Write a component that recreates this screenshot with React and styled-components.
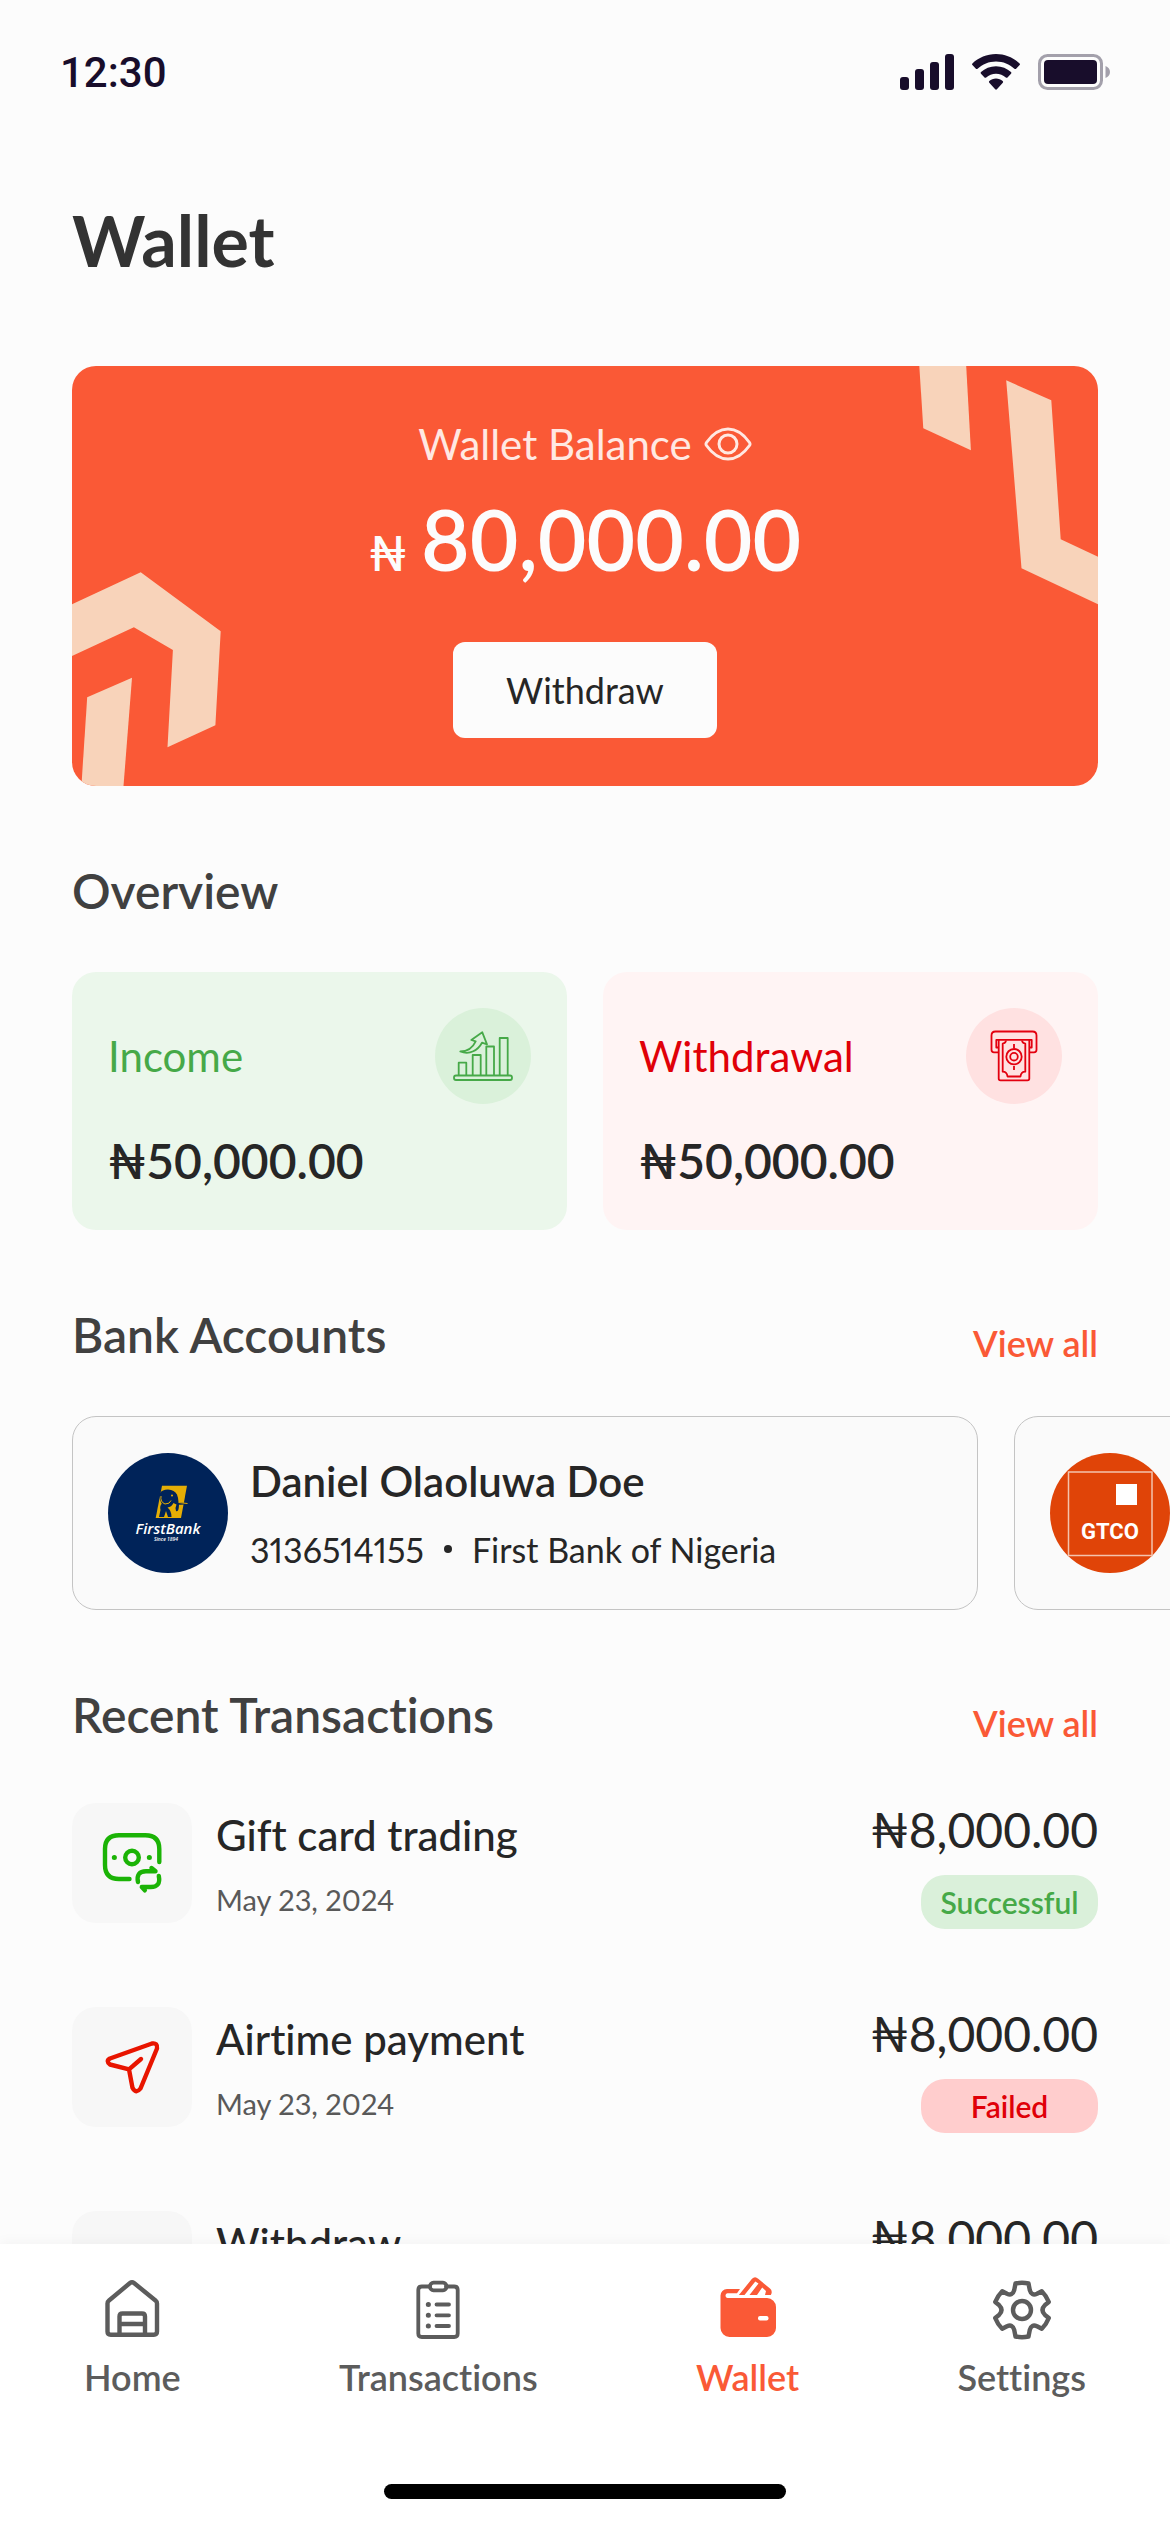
import React from 'react';
import styled, { createGlobalStyle } from 'styled-components';

const GlobalStyle = createGlobalStyle`
  * {
    box-sizing: border-box;
    margin: 0;
    padding: 0;
  }

  body {
    background: #fcfcfc;
    font-family: Lato, "Open Sans", sans-serif;
    font-variant-ligatures: none;
    color: #262626;
  }
`;

const transactions = [
  { id: 1, title: 'Gift card trading', date: 'May 23, 2024', amount: '₦8,000.00', status: 'Successful', icon: 'gift' },
  { id: 2, title: 'Airtime payment', date: 'May 23, 2024', amount: '₦8,000.00', status: 'Failed', icon: 'send' },
  { id: 3, title: 'Withdraw', date: 'May 23, 2024', amount: '₦8,000.00', status: 'Successful', icon: 'send' },
];

/* ---------- icons ---------- */

const SignalIcon = () => (
  <svg width="54" height="36" viewBox="0 0 54 36" fill="#180d2b" aria-hidden="true">
    <rect x="0" y="23" width="9" height="13" rx="3" />
    <rect x="15" y="15" width="9" height="21" rx="3" />
    <rect x="30" y="8" width="9" height="28" rx="3" />
    <rect x="45" y="0" width="9" height="36" rx="3" />
  </svg>
);

const WifiIcon = () => (
  <svg width="48" height="36" viewBox="0 0 48 36" fill="#180d2b" aria-hidden="true">
    <path d="M24 0C14.800 0 6.500 3.600.400 9.400c-.5.500-.5 1.200 0 1.700l3.500 3.600c.5.500 1.200.5 1.700 0C10.400 10.200 16.900 7.400 24 7.400s13.600 2.800 18.400 7.300c.5.500 1.200.5 1.700 0l3.500-3.600c.5-.5.5-1.200 0-1.700C41.500 3.600 33.200 0 24 0z" />
    <path d="M24 12.200c-5.800 0-11.100 2.200-15 5.900-.5.500-.5 1.200 0 1.700l3.500 3.600c.5.500 1.200.5 1.700 0 2.600-2.300 6-3.700 9.800-3.700s7.200 1.400 9.800 3.700c.5.500 1.200.5 1.700 0l3.500-3.600c.5-.5.5-1.200 0-1.700-3.900-3.700-9.200-5.900-15-5.900z" />
    <path d="M24 24.600c-2.600 0-4.900.9-6.700 2.400-.5.500-.5 1.200 0 1.700l5.900 6.600c.5.500 1.200.5 1.700 0l5.900-6.600c.5-.5.400-1.200-.1-1.700-1.800-1.500-4.100-2.400-6.700-2.400z" />
  </svg>
);

const BatteryIcon = () => (
  <svg width="72" height="36" viewBox="0 0 72 36" aria-hidden="true">
    <rect x="1.500" y="1.500" width="62" height="33" rx="8" fill="none" stroke="#a3a0ab" strokeWidth="3" />
    <rect x="6" y="6" width="53" height="24" rx="4" fill="#180d2b" />
    <path d="M67.500 12v12c2.600-1 4.500-3.300 4.500-6s-1.900-5-4.500-6z" fill="#a3a0ab" />
  </svg>
);

const EyeIcon = () => (
  <svg width="48" height="34" viewBox="0 0 48 34" fill="none" stroke="#ffe8e2" strokeWidth="3" aria-hidden="true">
    <path d="M2.500 15.500Q12 2 24 2t21.500 13.500q1 1.500 0 3Q36 32 24 32T2.500 18.500q-1-1.500 0-3z" />
    <circle cx="24" cy="17" r="9" />
  </svg>
);

const IncomeIcon = () => (
  <svg width="96" height="96" viewBox="0 0 96 96" fill="none" stroke="#46a948" strokeWidth="1.800" strokeLinejoin="round" aria-hidden="true">
    <rect x="19" y="67.500" width="58" height="4.500" rx="2" />
    <path d="M23.700 67V54.700h7.600V67M37.700 67V47h8v20M51.300 67V38.500H59V67M64.700 67V30h8v37" />
    <path d="M25.300 43.500c7 0 12.500-4 15.400-10.200l-4.400-1.300 11-7.700L52 36.300l-5-1.600c-4 7.300-12 12.600-21.700 8.800z" />
  </svg>
);

const WithdrawalIcon = () => (
  <svg width="96" height="96" viewBox="0 0 96 96" fill="none" stroke="#e3000f" strokeWidth="1.800" strokeLinejoin="round" aria-hidden="true">
    <path d="M32.500 44.300H28q-2.500 0-2.500-2.500V27.500q0-4 4-4h37q4 0 4 4v14.300q0 2.500-2.500 2.500h-4.500" />
    <path d="M32.500 39.500h-2.200v-7.600h35.400v7.600h-2.200" />
    <path d="M32.700 32v38.500q0 1.800 1.800 1.800h27q1.800 0 1.800-1.800V32" />
    <path d="M40 32.500q-.3 2.700-3.300 3.200v28q4.300 0 4.800 4.800h13q.5-4.800 4.800-4.800v-28q-3-.5-3.300-3.200M48 36v4M48 58v4" />
    <circle cx="48" cy="48.700" r="7.700" />
    <circle cx="48" cy="48.700" r="3.800" />
  </svg>
);

const GiftIcon = () => (
  <svg width="120" height="120" viewBox="0 0 120 120" fill="none" stroke="#1bb306" strokeWidth="4.400" strokeLinecap="round" strokeLinejoin="round" aria-hidden="true">
    <path d="M87.300 59V46q0-13.700-14-13.700H47Q33 32.300 33 46v16q0 14 14 14h10.500" />
    <circle cx="60" cy="54.500" r="6.800" />
    <path d="M42.300 54.500h.1M77.300 54.500h.1" strokeWidth="5" />
    <path d="M66 79q-2.200-10.700 8-10.700h9.500l-4-3.300M86.800 73q2.200 11-8 11h-9l3 3.300" />
  </svg>
);

const SendIcon = () => (
  <svg width="120" height="120" viewBox="0 0 120 120" fill="none" stroke="#e81500" strokeWidth="4.400" strokeLinecap="round" strokeLinejoin="round" aria-hidden="true">
    <path d="M80 36.500 38 51.500q-4.500 2.500 0 6l19 4.800 3.500 18.500q3.500 6.500 8 .7L85 41.500q.8-6-5-5zM57 62.300 69 52" />
  </svg>
);

const HomeIcon = () => (
  <svg width="72" height="72" viewBox="0 0 72 72" fill="none" stroke="currentColor" strokeWidth="4.400" strokeLinejoin="round" aria-hidden="true">
    <path d="M11.500 29.500q0-1.800 1.500-3L34 9q2-1.600 4 0l21.500 17.500q1.500 1.200 1.500 3v28q0 3.200-3.200 3.200H14.700q-3.200 0-3.200-3.200z" />
    <path d="M23.500 60V42.500q0-3 3-3H46q3 0 3 3V60M23.500 50H49" />
  </svg>
);

const ClipboardIcon = () => (
  <svg width="72" height="72" viewBox="0 0 72 72" fill="none" stroke="currentColor" strokeWidth="3.800" strokeLinecap="round" aria-hidden="true">
    <path d="M28 12.500h-8.200q-3.500 0-3.500 3.500v43.500q0 3.500 3.500 3.500h32.400q3.500 0 3.500-3.500V16q0-3.500-3.500-3.500H44" />
    <rect x="28" y="8.700" width="16.500" height="7.600" rx="3.500" />
    <path d="M34.500 30.500H47M34.500 41.300H47M34.500 52H47" />
    <path d="M26.300 30.500h.1M26.300 41.300h.1M26.300 52h.1" strokeWidth="5" />
  </svg>
);

const WalletIcon = () => (
  <svg width="72" height="72" viewBox="2 0 72 72" fill="currentColor" aria-hidden="true">
    <path d="M30 15 27 19.300H17.400a2.400 2.400 0 0 0 0 4.700H57a9 9 0 0 1 9 9v21a9 9 0 0 1-9 9H19.500a9 9 0 0 1-9-9V21.500a6.500 6.500 0 0 1 6.500-6.500z" />
    <path d="M28.900 21 42 4.800q3-3.300 6.200 0L60 14.500q3 2.500.8 6.500H55l1-4-3.800-3.500L47 21h-7.500L48.500 9.500 45.300 7.500 34.500 21z" />
    <rect x="48" y="42" width="10.500" height="4.500" rx="2" fill="#fff" />
  </svg>
);

const GearIcon = () => (
  <svg width="72" height="72" viewBox="0 0 72 72" fill="none" stroke="currentColor" strokeWidth="4.400" strokeLinejoin="round" aria-hidden="true">
    <path d="M29.500 9.500Q36 8 42.500 9.500l1.300 6.700q1.700 6 7.200 3.500l4.800-2.500q4.700 4.800 7 10.800L59 31q-5 5 0 10l3.800 3q-2.300 6-7 10.800L51 52.300q-5.500-2.500-7.200 3.500l-1.300 6.700Q36 64 29.500 62.500l-1.300-6.700q-1.700-6-7.200-3.500l-4.800 2.500q-4.700-4.800-7-10.800l3.800-3q5-5 0-10l-3.800-3q2.300-6 7-10.800l4.800 2.500q5.500 2.500 7.200-3.500z" />
    <circle cx="36" cy="36" r="9" />
  </svg>
);

const FirstBankLogo = () => (
  <svg width="120" height="120" viewBox="0 0 120 120" role="img" aria-label="FirstBank">
    <circle cx="60" cy="60" r="60" fill="#002359" />
    <path d="M54 32.700h25L73 65H47.700z" fill="#e5ae05" />
    <path
      d="M52 40q2-3.500 8-3.500 6.500.5 9 5 1.500 4 1.500 7.500l8 1.200q-2 2-7.500 1.600-.3 8-3 6.200-1.200-3 .5-6.500l-3-1.500q-2 4-6 4.500 4 3 4 9.500h-3.500l-2-6-2 6h-5l1.500-7q-1-4 1.200-6.200Q51 46 52 40z"
      fill="#002359"
    />
    <path d="M53 43q-1 6 4 8 5 0 6-3.500M70.500 49.500l9 1" fill="none" stroke="#e5ae05" strokeWidth="1" />
    <circle cx="64" cy="42.500" r="1" fill="#e5ae05" />
    <LogoName x="60" y="81">FirstBank</LogoName>
    <LogoTagline x="58" y="88">Since 1894</LogoTagline>
  </svg>
);

const GtcoLogo = () => (
  <svg width="120" height="120" viewBox="0 0 120 120" role="img" aria-label="GTCO">
    <circle cx="60" cy="60" r="60" fill="#e04408" />
    <rect x="18.500" y="19" width="83.500" height="83.500" fill="none" stroke="#f4c3ad" strokeWidth="1.500" />
    <rect x="66" y="31" width="21" height="21" fill="#fff" />
    <GtcoName x="60" y="86">GTCO</GtcoName>
  </svg>
);

const icons = { gift: <GiftIcon />, send: <SendIcon /> };

/* ---------- page ---------- */

const App = () => {
  return (
    <Screen>
      <GlobalStyle />
      <StatusBar>
        <Time>12:30</Time>
        <StatusIcons>
          <SignalIcon />
          <WifiIcon />
          <BatteryIcon />
        </StatusIcons>
      </StatusBar>

      <Content>
        <PageTitle>Wallet</PageTitle>

        <BalanceCard>
          <CornerArt $corner="left" width="150" height="216" viewBox="0 204 150 216" aria-hidden="true">
            <path d="M0 238.300 68.700 206.300l80 59-5.300 94-47.900 22 5.400-97.300-39-22.700L0 290z" />
            <path d="M15.200 331.300 60 311.700 51.500 420H9.400z" />
          </CornerArt>
          <CornerArt $corner="right" width="190" height="240" viewBox="0 0 190 240" aria-hidden="true">
            <path d="M11.300 0h46.900l4.700 84.300-47.600-22z" />
            <path d="M98.200 14.300l45.100 20 9.400 139L190 190.700v47.600l-76.500-36z" />
          </CornerArt>
          <BalanceLabel>
            Wallet Balance
            <EyeButton type="button" aria-label="Hide balance">
              <EyeIcon />
            </EyeButton>
          </BalanceLabel>
          <Balance>
            <Currency>₦</Currency>80,000.00
          </Balance>
          <WithdrawButton type="button">Withdraw</WithdrawButton>
        </BalanceCard>

        <SectionHeader>
          <SectionTitle>Overview</SectionTitle>
        </SectionHeader>
        <StatGrid>
          <StatCard $bg="#ebf7eb">
            <StatTop>
              <StatLabel $color="#46a948">Income</StatLabel>
              <StatIcon $bg="#daf1da"><IncomeIcon /></StatIcon>
            </StatTop>
            <StatAmount>₦50,000.00</StatAmount>
          </StatCard>
          <StatCard $bg="#fff4f4">
            <StatTop>
              <StatLabel $color="#e00008">Withdrawal</StatLabel>
              <StatIcon $bg="#ffe1e1"><WithdrawalIcon /></StatIcon>
            </StatTop>
            <StatAmount>₦50,000.00</StatAmount>
          </StatCard>
        </StatGrid>

        <SectionHeader>
          <SectionTitle>Bank Accounts</SectionTitle>
          <ViewAll href="#accounts">View all</ViewAll>
        </SectionHeader>
        <BankList>
          <BankCard>
            <FirstBankLogo />
            <BankInfo>
              <BankName>Daniel Olaoluwa Doe</BankName>
              <BankMeta>
                <span>3136514155</span>
                <Dot />
                <span>First Bank of Nigeria</span>
              </BankMeta>
            </BankInfo>
          </BankCard>
          <BankCard>
            <GtcoLogo />
          </BankCard>
        </BankList>

        <SectionHeader>
          <SectionTitle>Recent Transactions</SectionTitle>
          <ViewAll href="#transactions">View all</ViewAll>
        </SectionHeader>
        <TransactionList>
          {transactions.map((item) => (
            <Transaction key={item.id}>
              <IconBox>{icons[item.icon]}</IconBox>
              <TransactionInfo>
                <TransactionTitle>{item.title}</TransactionTitle>
                <TransactionDate>{item.date}</TransactionDate>
              </TransactionInfo>
              <TransactionSide>
                <Amount>{item.amount}</Amount>
                <Badge $failed={item.status === 'Failed'}>{item.status}</Badge>
              </TransactionSide>
            </Transaction>
          ))}
        </TransactionList>
      </Content>

      <BottomNav>
        <NavItems>
          <NavLink href="#home"><HomeIcon />Home</NavLink>
          <NavLink href="#transactions"><ClipboardIcon />Transactions</NavLink>
          <NavLink href="#wallet" $active aria-current="page"><WalletIcon />Wallet</NavLink>
          <NavLink href="#settings"><GearIcon />Settings</NavLink>
        </NavItems>
        <HomeIndicator />
      </BottomNav>
    </Screen>
  );
};

const Screen = styled.div`
  display: flex;
  flex-direction: column;
  height: 100vh;
  overflow: hidden;
`;

const StatusBar = styled.header`
  display: flex;
  flex-shrink: 0;
  align-items: center;
  justify-content: space-between;
  height: 144px;
  padding: 0 60px;
`;

const Time = styled.span`
  font-family: Roboto, sans-serif;
  font-size: 42px;
  font-weight: 500;
  color: #180d2b;
`;

const StatusIcons = styled.div`
  display: flex;
  align-items: center;
  gap: 18px;
`;

const Content = styled.main`
  flex: 1;
  min-height: 0;
  padding: 0 72px;
  overflow-y: auto;
  scrollbar-width: none;
`;

const PageTitle = styled.h1`
  margin: 53px 0 83px;
  font-size: 70px;
  line-height: 86px;
  font-weight: 700;
  color: #333;
`;

const BalanceCard = styled.section`
  position: relative;
  display: flex;
  flex-direction: column;
  align-items: center;
  padding: 53px 0 48px;
  border-radius: 24px;
  background: #fa5936;
  overflow: hidden;
`;

const CornerArt = styled.svg`
  position: absolute;
  ${({ $corner }) => ($corner === 'left' ? 'left: 0; bottom: 0;' : 'right: 0; top: 0;')}
  fill: #f8d3ba;
`;

const BalanceLabel = styled.div`
  display: flex;
  align-items: center;
  gap: 12px;
  font-size: 42px;
  line-height: 50px;
  color: #ffe8e2;
`;

const EyeButton = styled.button`
  display: flex;
  border: none;
  background: none;
  cursor: pointer;
`;

const Balance = styled.p`
  display: flex;
  align-items: baseline;
  gap: 14px;
  margin-top: 20px;
  font-size: 84px;
  line-height: 100px;
  font-weight: 600;
  color: #fcfcfc;
`;

const Currency = styled.span`
  font-size: 48px;
  line-height: 58px;
`;

const WithdrawButton = styled.button`
  margin-top: 53px;
  width: 264px;
  height: 96px;
  border: none;
  border-radius: 12px;
  background: #fcfcfc;
  font-family: inherit;
  font-size: 36px;
  font-weight: 400;
  color: #262626;
  cursor: pointer;
`;

const SectionHeader = styled.div`
  display: flex;
  align-items: flex-end;
  justify-content: space-between;
  margin: 76px 0 52px;
`;

const SectionTitle = styled.h2`
  font-size: 48px;
  line-height: 58px;
  font-weight: 600;
  color: #404040;
`;

const ViewAll = styled.a`
  font-size: 36px;
  line-height: 42px;
  font-weight: 600;
  color: #fa5936;
  text-decoration: none;
`;

const StatGrid = styled.div`
  display: grid;
  grid-template-columns: 1fr 1fr;
  gap: 36px;
`;

const StatCard = styled.article`
  padding: 36px 36px 40px;
  border-radius: 24px;
  background: ${({ $bg }) => $bg};
`;

const StatTop = styled.div`
  display: flex;
  align-items: center;
  justify-content: space-between;
  margin-bottom: 28px;
`;

const StatLabel = styled.h3`
  font-size: 42px;
  line-height: 50px;
  font-weight: 400;
  color: ${({ $color }) => $color};
`;

const StatIcon = styled.div`
  display: flex;
  border-radius: 50%;
  background: ${({ $bg }) => $bg};
`;

const StatAmount = styled.p`
  font-size: 48px;
  line-height: 58px;
  font-weight: 600;
`;

const BankList = styled.div`
  display: flex;
  gap: 36px;
  margin-right: -72px;
  overflow-x: auto;
  scrollbar-width: none;
`;

const BankCard = styled.article`
  display: flex;
  flex: 0 0 calc(100% - 192px);
  align-items: center;
  gap: 22px;
  padding: 36px 35px;
  border: 1px solid #c4c4c4;
  border-radius: 24px;
  background: #fafafa;
`;

const BankInfo = styled.div`
  display: flex;
  flex-direction: column;
  gap: 22px;
`;

const BankName = styled.h3`
  font-size: 42px;
  line-height: 50px;
  font-weight: 600;
`;

const BankMeta = styled.p`
  display: flex;
  align-items: center;
  gap: 20px;
  font-size: 34px;
  line-height: 43px;
  font-variant-numeric: proportional-nums;
`;

const Dot = styled.i`
  width: 8px;
  height: 8px;
  border-radius: 50%;
  background: #262626;
`;

const LogoName = styled.text`
  font-family: "Open Sans", sans-serif;
  font-size: 15px;
  font-weight: 600;
  font-style: italic;
  text-anchor: middle;
  fill: #fff;
`;

const LogoTagline = styled(LogoName)`
  font-size: 5px;
`;

const GtcoName = styled(LogoName)`
  font-family: Roboto, sans-serif;
  font-size: 22px;
  font-weight: 700;
  font-style: normal;
`;

const TransactionList = styled.ul`
  display: flex;
  flex-direction: column;
  gap: 78px;
  margin-top: 59px;
  list-style: none;
`;

const Transaction = styled.li`
  display: flex;
  gap: 24px;
`;

const IconBox = styled.div`
  width: 120px;
  height: 120px;
  border-radius: 24px;
  background: #f7f7f7;
`;

const TransactionInfo = styled.div`
  display: flex;
  flex: 1;
  flex-direction: column;
  gap: 22px;
  padding-top: 7px;
`;

const TransactionTitle = styled.h3`
  font-size: 42px;
  line-height: 50px;
  font-weight: 500;
`;

const TransactionDate = styled.p`
  font-size: 29px;
  line-height: 36px;
  font-variant-numeric: proportional-nums;
  color: #595959;
`;

const TransactionSide = styled.div`
  display: flex;
  flex-direction: column;
  align-items: flex-end;
  gap: 18px;
`;

const Amount = styled.p`
  font-size: 48px;
  line-height: 54px;
`;

const Badge = styled.span`
  width: 177px;
  border-radius: 24px;
  background: ${({ $failed }) => ($failed ? '#ffcdcd' : '#daf0da')};
  color: ${({ $failed }) => ($failed ? '#e00008' : '#46a948')};
  font-size: 30px;
  line-height: 54px;
  font-weight: 600;
  text-align: center;
`;

const BottomNav = styled.footer`
  position: relative;
  display: flex;
  flex-direction: column;
  flex-shrink: 0;
  align-items: center;
  padding: 30px 84px 24px;
  background: #fff;
  box-shadow: 0 -2px 12px rgba(0, 0, 0, 0.04);
`;

const NavItems = styled.nav`
  display: flex;
  justify-content: space-between;
  align-self: stretch;
`;

const NavLink = styled.a`
  display: flex;
  flex-direction: column;
  align-items: center;
  gap: 10px;
  font-size: 36px;
  line-height: 43px;
  font-weight: 600;
  color: ${({ $active }) => ($active ? '#fa5936' : '#5c5c5c')};
  text-decoration: none;
`;

const HomeIndicator = styled.div`
  width: 402px;
  height: 15px;
  margin-top: 85px;
  border-radius: 8px;
  background: #000;
`;

export default App;
